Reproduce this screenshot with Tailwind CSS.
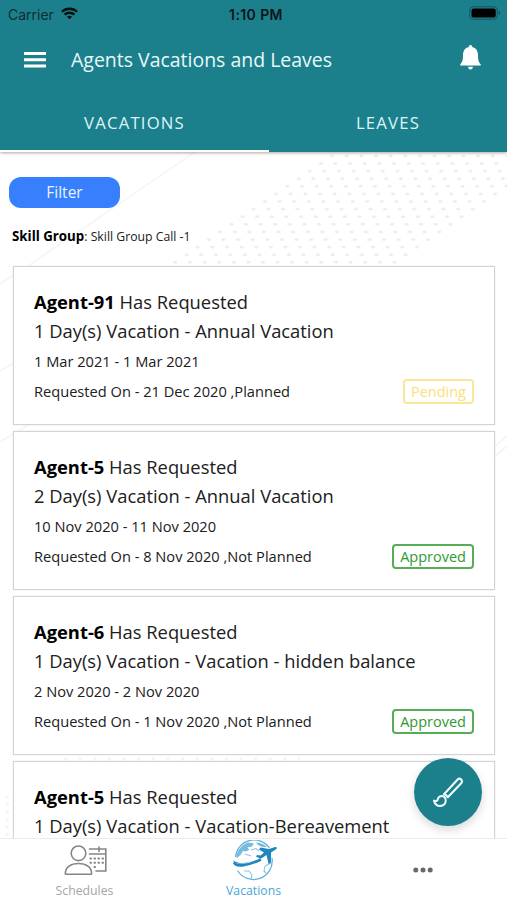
<!DOCTYPE html>
<html lang="en">
<head>
<meta charset="utf-8">
<title>Agents Vacations and Leaves</title>
<script src="https://cdn.jsdelivr.net/npm/@tailwindcss/browser@4"></script>
</head>
<body class="bg-white">
<div class="relative flex h-[900px] w-[507px] flex-col overflow-hidden bg-white font-['Open_Sans','Noto_Sans',sans-serif] text-[#202020]">

  <header class="relative z-10 flex h-[152px] shrink-0 flex-col bg-[#1c808c] shadow-[0_1px_3px_rgba(0,0,0,0.35)]">
    <div class="grid h-[28px] grid-cols-3 items-center pr-[6px] pl-[8px] font-['Inter','Liberation_Sans',sans-serif] text-[14px]">
      <div class="flex items-center gap-[7px]"><span class="text-[#0d2c31]">Carrier</span>
        <svg class="mb-[2px] h-[13px] w-[17px]" viewBox="0 0 17 13" fill="none" stroke="#071013" stroke-width="2.3"><path d="M.9 4.8C5 .7 12 .7 16.100 4.800"/><path d="M3.600 7.700C6.300 5.100 10.700 5.100 13.400 7.700"/><path d="M8.500 12.300 5.900 9.700Q8.500 7.600 11.100 9.700Z" fill="#071013" stroke="none"/></svg>
      </div>
      <div class="pl-[3px] text-center font-semibold tracking-[0.400px] text-[#0a1518]">1:10 PM</div>
      <svg class="mb-[2px] h-[14px] w-[32px] justify-self-end" viewBox="0 0 32 14"><rect x=".8" y=".8" width="27.500" height="12.400" rx="3.500" fill="none" stroke="#125560"/><rect x="2.500" y="2.500" width="24.200" height="9" rx="2" fill="#000"/><path d="M29.700 5v4q1.500-.6 1.500-2t-1.500-2" fill="#125560"/></svg>
    </div>
    <div class="flex h-[64px] items-center pr-[26px] pl-[24px]">
      <svg class="h-[16px] w-[22px]" viewBox="0 0 22 16" fill="#fff"><path d="M0 0h22v3H0zM0 6.300h22v3H0zM0 12.600h22v3H0z"/></svg>
      <h1 class="ml-[25px] flex-1 text-[19.480px] whitespace-nowrap text-[#e8f8f9]">Agents Vacations and Leaves</h1>
      <svg class="mb-[6px] h-[25px] w-[21px]" viewBox="0 0 21 25" fill="#fff"><path d="M10.500 0C11.600 0 12.200.8 12.200 2 16 2.800 18 6 18 10c0 5 .6 7 2.700 9.300V20.500H.3V19.300C2.400 17 3 15 3 10c0-4 2-7.200 5.800-8C8.800.8 9.400 0 10.500 0M8 21.700h5q-.4 2.800-2.500 2.800T8 21.700"/></svg>
    </div>
    <nav class="grid flex-1 grid-cols-[269px_238px] text-center text-[16.700px] tracking-[1.200px] text-[#dcf5f6]">
      <div class="border-b-2 border-white pt-[18px]">VACATIONS</div>
      <div class="pt-[18px]">LEAVES</div>
    </nav>
  </header>

  <main class="relative flex-1 overflow-hidden">
    <svg class="absolute inset-0 h-[686px] w-[507px]" viewBox="0 152 507 686">
      <defs>
        <pattern id="dots" width="14.600" height="7.600" patternUnits="userSpaceOnUse" patternTransform="matrix(1 0 -1.474 1 304.700 159.700)"><ellipse rx="2" ry="1.500" fill="#ededed" transform="matrix(1 0 1.474 1 7.300 3.800)"/></pattern>
        <pattern id="dots2" width="14.600" height="7.600" patternUnits="userSpaceOnUse" patternTransform="translate(0 755)"><circle cx="7.300" cy="3.800" r="1.600" fill="#f3f3f3"/></pattern>
      </defs>
      <path d="M328 152H562L400 265H162Z" fill="url(#dots)"/>
      <path d="M60 754H300V762H60ZM0 796H12V838H0Z" fill="url(#dots2)"/>
      <path d="M195 152 28 266" stroke="#f5f5f5" stroke-width="1.500"/>
      <path d="M0 284 13 275M0 371 13 363M0 442 30 424M495 446 507 436M495 456 507 446" stroke="#f6f6f6" stroke-width="2"/>
    </svg>
    <div class="relative">
      <button class="mt-[25px] ml-[9px] block h-[31px] w-[111px] rounded-[12px] bg-[#377ffc] text-[15.500px] leading-[29px] text-[#e9f3ff]">Filter</button>
      <p class="mt-[18px] mb-[20px] ml-[12px] h-[20px] text-[12.250px] leading-[20px] whitespace-nowrap"><b class="text-[13.300px] text-black">Skill Group</b>: Skill Group Call -1</p>

      <div class="mr-[12px] ml-[13px] flex flex-col gap-[6px]">
        <article class="h-[159px] shrink-0 border border-[#d4d4d4] bg-white px-[20px] pt-[20px] shadow-[0_0_1px_#ccc]">
          <h2 class="text-[18.350px] leading-[29px] whitespace-nowrap"><b class="text-black">Agent-91</b> Has Requested</h2>
          <p class="text-[18.350px] leading-[29px] whitespace-nowrap">1 Day(s) Vacation - Annual Vacation</p>
          <p class="mt-px text-[14.630px] leading-[31px]">1 Mar 2021 - 1 Mar 2021</p>
          <div class="flex items-center justify-between text-[14.630px] leading-[29px]"><span>Requested On - 21 Dec 2020 ,Planned</span><span class="h-[25px] rounded-[4px] border-2 border-[#fbe795] px-[6px] text-[14.500px] leading-[21px] text-[#fbe07a]">Pending</span></div>
        </article>
        <article class="h-[159px] shrink-0 border border-[#d4d4d4] bg-white px-[20px] pt-[20px] shadow-[0_0_1px_#ccc]">
          <h2 class="text-[18.350px] leading-[29px] whitespace-nowrap"><b class="text-black">Agent-5</b> Has Requested</h2>
          <p class="text-[18.350px] leading-[29px] whitespace-nowrap">2 Day(s) Vacation - Annual Vacation</p>
          <p class="mt-px text-[14.630px] leading-[31px]">10 Nov 2020 - 11 Nov 2020</p>
          <div class="flex items-center justify-between text-[14.630px] leading-[29px]"><span>Requested On - 8 Nov 2020 ,Not Planned</span><span class="h-[25px] rounded-[4px] border-2 border-[#55ad55] px-[6px] text-[14.500px] leading-[21px] text-[#2e9a32]">Approved</span></div>
        </article>
        <article class="h-[159px] shrink-0 border border-[#d4d4d4] bg-white px-[20px] pt-[20px] shadow-[0_0_1px_#ccc]">
          <h2 class="text-[18.350px] leading-[29px] whitespace-nowrap"><b class="text-black">Agent-6</b> Has Requested</h2>
          <p class="text-[18.350px] leading-[29px] whitespace-nowrap">1 Day(s) Vacation - Vacation - hidden balance</p>
          <p class="mt-px text-[14.630px] leading-[31px]">2 Nov 2020 - 2 Nov 2020</p>
          <div class="flex items-center justify-between text-[14.630px] leading-[29px]"><span>Requested On - 1 Nov 2020 ,Not Planned</span><span class="h-[25px] rounded-[4px] border-2 border-[#55ad55] px-[6px] text-[14.500px] leading-[21px] text-[#2e9a32]">Approved</span></div>
        </article>
        <article class="h-[159px] shrink-0 border border-[#d4d4d4] bg-white px-[20px] pt-[20px] shadow-[0_0_1px_#ccc]">
          <h2 class="text-[18.350px] leading-[29px] whitespace-nowrap"><b class="text-black">Agent-5</b> Has Requested</h2>
          <p class="text-[18.350px] leading-[29px] whitespace-nowrap">1 Day(s) Vacation - Vacation-Bereavement</p>
        </article>
      </div>
    </div>
    <button class="absolute right-[25px] bottom-[12px] flex size-[68px] items-center justify-center rounded-full bg-[#1c808c] shadow-[0_4px_10px_rgba(0,0,0,0.15)]" aria-label="Customize">
      <svg class="size-[32px]" viewBox="0 0 32 32" fill="none" stroke="#eefafa" stroke-width="2.100" stroke-linejoin="round"><path d="M12 18.200 25.400 3.700C28 1.200 31.500 4.500 29.200 7.200L15.800 21.200C15 19.500 13.700 18.600 12 18.200Z"/><path d="M11.400 20.300C8.900 19.400 6.200 20.700 5.800 23.200 5.500 25.100 4 25.300 2 24.700 3 28.400 6 30.200 9 29.900 12.600 29.500 14.600 26.200 13.500 22.800Q13 21 11.400 20.300Z"/></svg>
    </button>
  </main>

  <footer class="relative grid h-[62px] shrink-0 grid-cols-3 border-t border-[#ececec] bg-white text-center text-[12.250px] leading-[16px]">
    <div class="flex flex-col items-center text-[#a5a5a5]">
      <svg class="mt-[6px] h-[31px] w-[44px]" viewBox="0 0 44 31" fill="none" stroke="#858585" stroke-width="1.600" stroke-linecap="round"><circle cx="15.500" cy="8.300" r="7.300"/><path d="M2.300 28.500C2.300 22 8 18.500 15.500 18.500S28.600 22 28.600 28.500Q28.600 29.200 28 29.200H3Q2.300 29.200 2.300 28.500Z"/><path d="M26.500 4H42.800V26H33M26.500 9H42.800M36 2V6.500"/><path d="M27.500 13.500h.5M31.500 13.500h.5M35.500 13.500h.5M39.500 13.500h.5M27.500 17.800h.5M31.500 17.800h.5M35.500 17.800h.5M39.500 17.800h.5M31.500 22h.5" stroke-width="2.100"/></svg>
      <span class="mt-[7px]">Schedules</span>
    </div>
    <div class="flex flex-col items-center text-[#4aa5d8]">
      <svg class="mt-[1px] h-[42px] w-[46px]" viewBox="0 0 46 42" fill="none" stroke="#63b2dc" stroke-width="1.300"><path d="M4.500 17A18.700 18.700 0 0 1 38.500 8M41 18A18.700 18.700 0 0 1 6.500 30.500"/><path d="M5 16C6.500 10 11 5 17 2.500L23 3.500 21 6.500 16.500 7.500 18.500 10 14.500 11.500 12 11 9.500 15 6 18Z" fill="#79badf" stroke="none"/><path d="M25 2.500Q31 2.500 36 7L31.500 7 27 5Z" fill="#79badf" stroke="none"/><path d="M13 31 18 31 21 35 20 39M34 26 40 23M34 26 33 31 35 33M20 10 25 8.500 28 11M14 14 20 16" stroke="#8cc3e3" stroke-width="1.100"/><path d="M2.500 20.500C1.500 25.500 14 25 31 18L35.500 15 37.500 24 40 22.500 40 12.500 45.500 9Q46.500 6.500 44 7L38 9 29.500 7.500 28 9.500 33 12.500 29.500 15.500 26 15 25 16.500 29 18.500C18 23 9 25 2.500 20.500Z" fill="#2186bd" stroke="none"/><path d="M3 22.500C5 27.500 17 25.500 30 19.500" stroke="#2186bd" stroke-width="2.600"/></svg>
      <span class="mt-[1px]">Vacations</span>
    </div>
    <div class="flex flex-col items-center">
      <svg class="mt-[28px] h-[6px] w-[20px]" viewBox="0 0 20 6" fill="#686868"><circle cx="2.800" cy="3" r="2.500"/><circle cx="10" cy="3" r="2.500"/><circle cx="17.200" cy="3" r="2.500"/></svg>
    </div>
  </footer>
</div>
</body>
</html>
